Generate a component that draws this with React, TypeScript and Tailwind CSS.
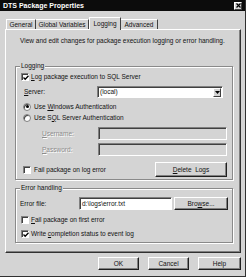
import React from "react";

const Check = ({ checked }: { checked?: boolean }) => (
  <span className="relative inline-block w-[8px] h-[8px] bg-white border-t border-l border-[#808080] border-b border-r border-b-white border-r-white shadow-[inset_1px_1px_0_#404040] shrink-0">
    {checked && (
      <svg className="absolute left-[1px] top-[1px]" width="6" height="6" viewBox="0 0 6 6">
        <path d="M0.5 2.5 L2.2 4.3 L5.5 0.8" stroke="#000" strokeWidth="1.3" fill="none" />
      </svg>
    )}
  </span>
);

const Radio = ({ checked }: { checked?: boolean }) => (
  <span className="flex items-center justify-center w-[8px] h-[8px] rounded-full bg-white border border-[#808080] shadow-[inset_1px_1px_0_#404040] shrink-0">
    {checked && <span className="block w-[3px] h-[3px] rounded-full bg-black" />}
  </span>
);

const Btn = ({ children, w, def }: { children: React.ReactNode; w: string; def?: boolean }) => (
  <div
    className={`${w} h-full flex items-center justify-center bg-[#d4d4d4] border-t border-l border-white border-r border-b border-r-[#202020] border-b-[#202020] shadow-[inset_-1px_-1px_0_#808080] ${def ? "outline outline-1 outline-black" : ""}`}
  >
    {children}
  </div>
);

const U = ({ children }: { children: React.ReactNode }) => <span className="underline underline-offset-[1px]">{children}</span>;

export default function App() {
  return (
    <div
      className="w-[246px] h-[277px] bg-[#d4d4d4] overflow-hidden flex flex-col text-[6.5px] leading-[8px] text-[#111] border-b border-r border-[#303030]"
      style={{ fontFamily: '"Liberation Sans", Arial, sans-serif' }}
    >
      {/* title bar */}
      <div className="h-[11px] bg-[#0c0c0c] flex items-center justify-between pl-[3px] pr-[3px] shrink-0">
        <span className="text-white font-bold text-[7px] leading-[9px]">DTS Package Properties</span>
        <div className="w-[8px] h-[8px] bg-[#d4d4d4] border-t border-l border-white border-r border-b border-r-[#404040] border-b-[#404040] flex items-center justify-center">
          <svg width="5" height="5" viewBox="0 0 5 5">
            <path d="M0.5 0.5 L4.5 4.5 M4.5 0.5 L0.5 4.5" stroke="#000" strokeWidth="1.2" />
          </svg>
        </div>
      </div>

      {/* tabs */}
      <div className="mt-[6px] h-[12px] flex items-end pl-[6px] shrink-0">
        <div className="w-[30px] h-[10px] flex items-center justify-center border-t border-l border-white border-r border-r-[#404040]">General</div>
        <div className="w-[53px] h-[10px] flex items-center justify-center border-t border-white border-r border-r-[#404040]">Global Variables</div>
        <div className="relative z-10 w-[32px] h-[13px] -mb-[1px] bg-[#d4d4d4] flex items-start pt-[2px] justify-center border-t border-l border-white border-r border-r-[#404040]">Logging</div>
        <div className="w-[37px] h-[10px] flex items-center justify-center border-t border-white border-r border-r-[#404040]">Advanced</div>
      </div>

      {/* panel */}
      <div className="ml-[5px] w-[236px] h-[224px] shrink-0 border-t border-l border-white border-r border-b border-r-[#303030] border-b-[#303030] shadow-[inset_-1px_-1px_0_#808080] flex flex-col">
        <div className="pl-[14px] mt-[7px]">View and edit changes for package execution logging or error handling.</div>

        {/* Logging group */}
        <fieldset className="ml-[9px] mt-[17px] w-[218px] border border-[#8a8a8a] shadow-[1px_1px_0_#fff,inset_1px_1px_0_#fff] px-0 pb-[2px] flex flex-col">
          <legend className="ml-[4px] px-[1px] bg-[#d4d4d4]">Logging</legend>
          <div className="mt-[2px] h-[10px] flex items-center pl-[5px] gap-[2px]">
            <Check checked />
            <span>
              <U>L</U>og package execution to SQL Server
            </span>
          </div>
          <div className="mt-[4px] h-[12px] flex items-center pl-[8px]">
            <span className="w-[73px]">
              <U>S</U>erver:
            </span>
            <div className="w-[126px] h-full bg-white border-t border-l border-[#808080] border-b border-r border-b-white border-r-white shadow-[inset_1px_1px_0_#404040] flex items-center justify-between pl-[2px] pr-[1px]">
              <span>(local)</span>
              <div className="w-[8px] h-[9px] bg-[#d4d4d4] border-t border-l border-white border-r border-b border-r-[#404040] border-b-[#404040] flex items-center justify-center">
                <svg width="5" height="3" viewBox="0 0 5 3">
                  <path d="M0 0 H5 L2.5 3 Z" fill="#000" />
                </svg>
              </div>
            </div>
          </div>
          <div className="mt-[4px] h-[9px] flex items-center pl-[7px] gap-[3px]">
            <Radio checked />
            <span>
              Use <U>W</U>indows Authentication
            </span>
          </div>
          <div className="mt-[2px] h-[9px] flex items-center pl-[7px] gap-[3px]">
            <Radio />
            <span>
              Use S<U>Q</U>L Server Authentication
            </span>
          </div>
          <div className="mt-[5px] h-[13px] flex items-center pl-[26px]">
            <span className="w-[56px] text-[#8c8c8c] [text-shadow:1px_1px_0_#fff]">
              <U>U</U>sername:
            </span>
            <div className="w-[129px] h-full border-t border-l border-[#808080] border-b border-r border-b-white border-r-white shadow-[inset_1px_1px_0_#404040]" />
          </div>
          <div className="mt-[3px] h-[13px] flex items-center pl-[26px]">
            <span className="w-[56px] text-[#8c8c8c] [text-shadow:1px_1px_0_#fff]">
              <U>P</U>assword:
            </span>
            <div className="w-[129px] h-full border-t border-l border-[#808080] border-b border-r border-b-white border-r-white shadow-[inset_1px_1px_0_#404040]" />
          </div>
          <div className="mt-[6px] h-[15px] flex items-center justify-between pl-[7px] pr-[5px]">
            <div className="flex items-center gap-[3px]">
              <Check />
              <span>Fail package on log error</span>
            </div>
            <Btn w="w-[72px]">
              <span>
                <U>D</U>elete&nbsp; Logs
              </span>
            </Btn>
          </div>
        </fieldset>

        {/* Error handling group */}
        <fieldset className="ml-[9px] mt-[4px] w-[218px] border border-[#8a8a8a] shadow-[1px_1px_0_#fff,inset_1px_1px_0_#fff] px-0 pb-[4px] flex flex-col">
          <legend className="ml-[4px] px-[1px] bg-[#d4d4d4]">Error handling</legend>
          <div className="mt-[5px] h-[13px] flex items-center pl-[4px]">
            <span className="w-[59px]">Error file:</span>
            <div className="w-[93px] h-full bg-white border-t border-l border-[#808080] border-b border-r border-b-white border-r-white shadow-[inset_1px_1px_0_#404040] flex items-center pl-[2px]">
              d:\logs\error.txt
            </div>
            <div className="ml-[2px] h-full">
              <Btn w="w-[54px]">
                <span>
                  Bro<U>w</U>se...
                </span>
              </Btn>
            </div>
          </div>
          <div className="mt-[6px] h-[8px] flex items-center pl-[5px] gap-[2px]">
            <Check />
            <span>
              <U>F</U>ail package on first error
            </span>
          </div>
          <div className="mt-[5px] h-[9px] flex items-center pl-[5px] gap-[2px]">
            <Check checked />
            <span>
              Write <U>c</U>ompletion status to event log
            </span>
          </div>
        </fieldset>
      </div>

      {/* buttons */}
      <div className="mt-[4px] h-[13px] flex justify-end gap-[9px] pr-[4px] shrink-0">
        <Btn w="w-[41px]">OK</Btn>
        <Btn w="w-[41px]">Cancel</Btn>
        <Btn w="w-[43px]">Help</Btn>
      </div>
    </div>
  );
}
